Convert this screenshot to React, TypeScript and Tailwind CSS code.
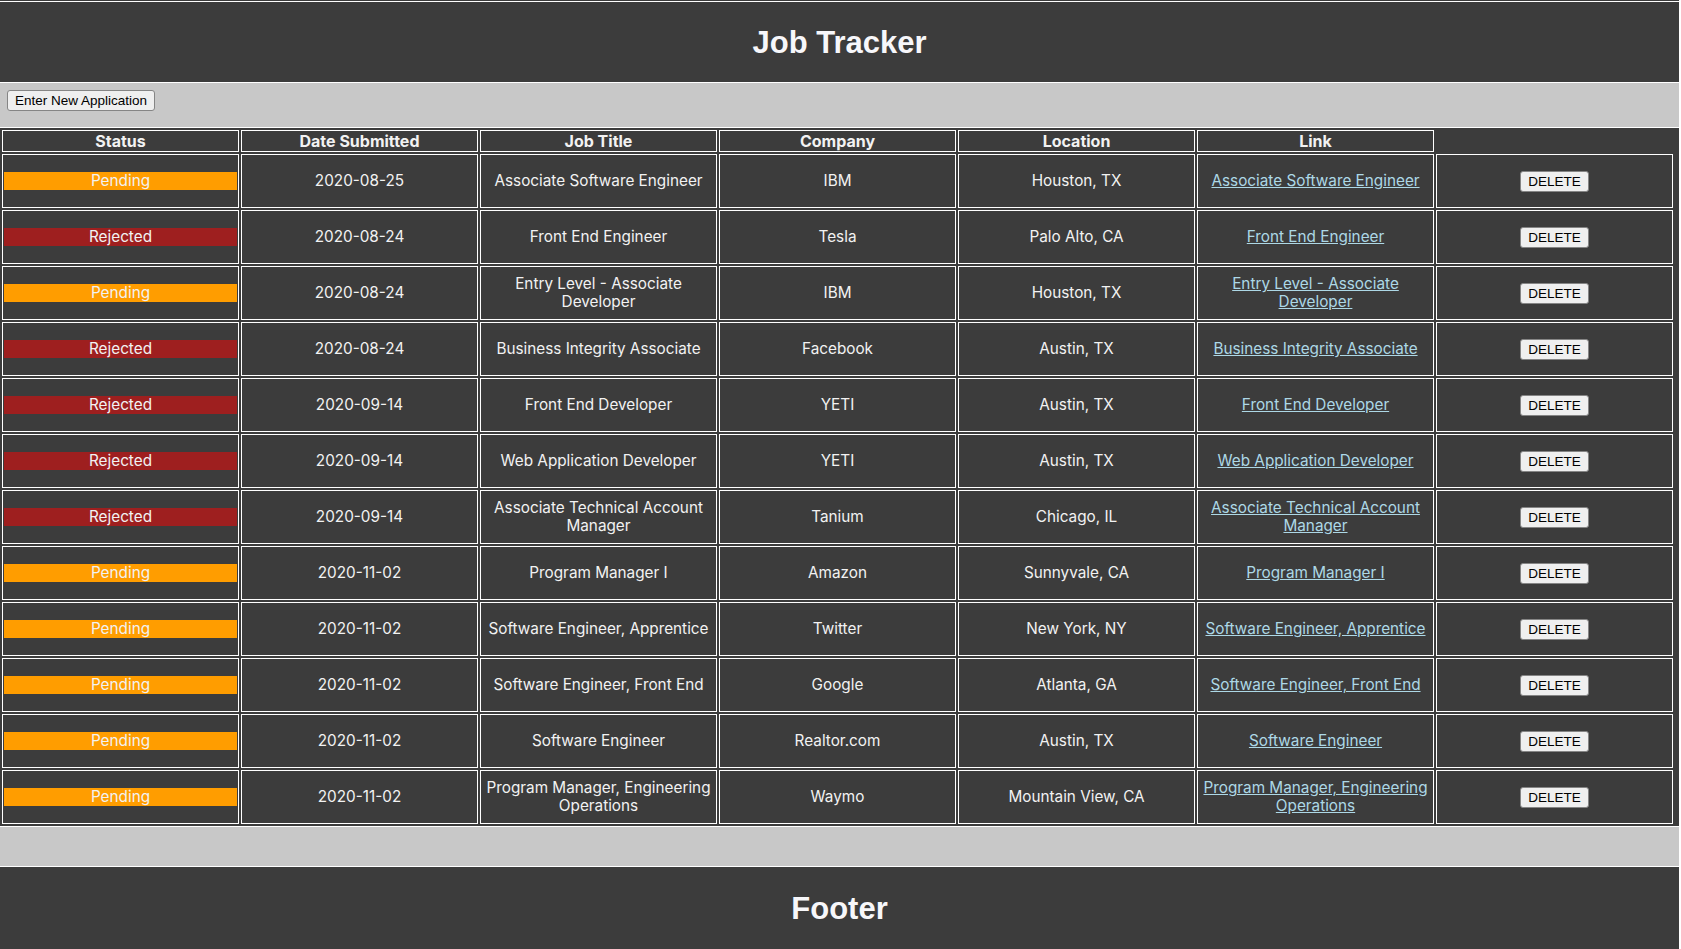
import React from "react";

type Status = "Pending" | "Rejected";

interface Job {
  status: Status;
  date: string;
  title: string;
  company: string;
  location: string;
}

const JOBS: Job[] = [
  { status: "Pending", date: "2020-08-25", title: "Associate Software Engineer", company: "IBM", location: "Houston, TX" },
  { status: "Rejected", date: "2020-08-24", title: "Front End Engineer", company: "Tesla", location: "Palo Alto, CA" },
  { status: "Pending", date: "2020-08-24", title: "Entry Level - Associate Developer", company: "IBM", location: "Houston, TX" },
  { status: "Rejected", date: "2020-08-24", title: "Business Integrity Associate", company: "Facebook", location: "Austin, TX" },
  { status: "Rejected", date: "2020-09-14", title: "Front End Developer", company: "YETI", location: "Austin, TX" },
  { status: "Rejected", date: "2020-09-14", title: "Web Application Developer", company: "YETI", location: "Austin, TX" },
  { status: "Rejected", date: "2020-09-14", title: "Associate Technical Account Manager", company: "Tanium", location: "Chicago, IL" },
  { status: "Pending", date: "2020-11-02", title: "Program Manager I", company: "Amazon", location: "Sunnyvale, CA" },
  { status: "Pending", date: "2020-11-02", title: "Software Engineer, Apprentice", company: "Twitter", location: "New York, NY" },
  { status: "Pending", date: "2020-11-02", title: "Software Engineer, Front End", company: "Google", location: "Atlanta, GA" },
  { status: "Pending", date: "2020-11-02", title: "Software Engineer", company: "Realtor.com", location: "Austin, TX" },
  { status: "Pending", date: "2020-11-02", title: "Program Manager, Engineering Operations", company: "Waymo", location: "Mountain View, CA" },
];

const HEADERS = ["Status", "Date Submitted", "Job Title", "Company", "Location", "Link"];

const td = "h-[54px] border border-white p-px text-center align-middle";
const btn =
  "h-[21px] rounded-[3px] border border-[#858585] bg-[#efefef] px-[7px] font-['Liberation_Sans',Arial,sans-serif] text-[13.5px] leading-[15px] text-black";

export default function App() {
  return (
    <div className="min-h-[949px] w-full bg-white">
      <div className="w-[1679px] bg-[#3c3c3c] pt-px font-['Inter',sans-serif] text-[#f2f2f2]">
        {/* Header */}
        <header className="flex h-[82px] items-center justify-center border-y border-white pt-[3px]">
          <h1 className="font-['Liberation_Sans',Arial,sans-serif] text-[31px] font-bold text-[#f7f7fa]">
            Job Tracker
          </h1>
        </header>

        {/* Toolbar */}
        <div className="flex h-[45px] items-start border-b border-white bg-[#c8c8c8] px-[7px] pt-[7px]">
          <button className={btn}>Enter New Application</button>
        </div>

        {/* Table */}
        <table className="w-[1675px] table-fixed border-separate border-spacing-[2px] text-[15.3px] leading-[18px]">
          <thead>
            <tr>
              {HEADERS.map((h) => (
                <th key={h} className="h-[22px] border border-white p-0 text-center align-middle text-[16px] font-bold leading-[20px]">
                  {h}
                </th>
              ))}
              <th className="p-0" />
            </tr>
          </thead>
          <tbody>
            {JOBS.map((job, i) => (
              <tr key={i}>
                <td className={td}>
                  <div
                    className={`h-[18px] leading-[18px] ${
                      job.status === "Pending" ? "bg-[#ff9d00]" : "bg-[#9e1f1f]"
                    }`}
                  >
                    {job.status}
                  </div>
                </td>
                <td className={td}>{job.date}</td>
                <td className={td}>{job.title}</td>
                <td className={td}>{job.company}</td>
                <td className={td}>{job.location}</td>
                <td className={td}>
                  <a href="#" className="text-[#add8e6] underline">
                    {job.title}
                  </a>
                </td>
                <td className={td}>
                  <button className={btn}>DELETE</button>
                </td>
              </tr>
            ))}
          </tbody>
        </table>

        {/* Spacer band */}
        <div className="h-[41px] border-y border-white bg-[#c8c8c8]" />

        {/* Footer */}
        <footer className="flex h-[82px] items-center justify-center pt-[3px]">
          <h2 className="font-['Liberation_Sans',Arial,sans-serif] text-[31px] font-bold text-[#f7f7fa]">
            Footer
          </h2>
        </footer>
      </div>
    </div>
  );
}
